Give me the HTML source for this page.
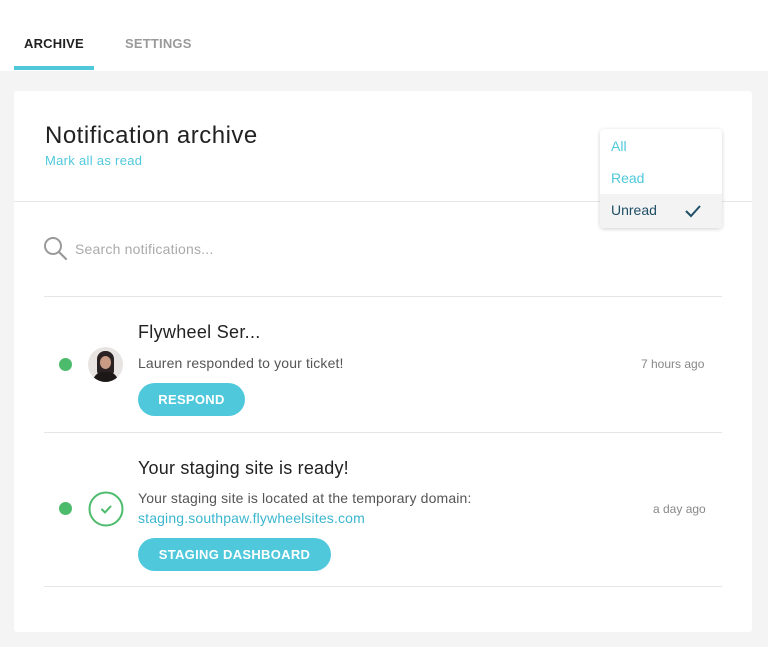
<!DOCTYPE html>
<html><head><style>
*{margin:0;padding:0;box-sizing:border-box}
body{width:768px;height:647px;background:#f4f4f5;font-family:"Liberation Sans",sans-serif;position:relative;overflow:hidden}
.top{position:absolute;left:0;top:0;width:768px;height:71px;background:#fff}
.t{position:absolute;font-size:13px;font-weight:bold;top:36px;letter-spacing:.2px}
.card{position:absolute;left:14px;top:91px;width:738px;height:541px;background:#fff;border-radius:3px}
.abs{position:absolute}
.hr{position:absolute;height:1px;background:#e6e6e6}
.btn{position:absolute;background:#4fc8dc;color:#fff;font-weight:bold;font-size:13px;border-radius:17px;height:33px;line-height:33px;text-align:center;letter-spacing:.3px}
.dot{position:absolute;width:13px;height:13px;border-radius:50%;background:#4cbc6c}
</style></head><body>
<div class="top"></div>
<div class="t" style="left:24px;color:#222">ARCHIVE</div>
<div class="t" style="left:125px;color:#9a9a9a">SETTINGS</div>
<div class="abs" style="left:14px;top:66px;width:80px;height:4px;background:#4fc8dc"></div>
<div class="card"></div>
<div class="abs" style="left:45px;top:122px;font-size:24px;letter-spacing:.5px;color:#222">Notification archive</div>
<div class="abs" style="left:45px;top:153px;font-size:13px;letter-spacing:.3px;color:#4fc8dc">Mark all as read</div>
<div class="hr" style="left:14px;top:201px;width:738px"></div>
<svg class="abs" style="left:43px;top:236px" width="26" height="26" viewBox="0 0 26 26"><circle cx="10" cy="10" r="8" fill="none" stroke="#999" stroke-width="2"/><path d="M16 16l7 7" stroke="#999" stroke-width="2.2" stroke-linecap="round"/></svg>
<div class="abs" style="left:75px;top:241px;font-size:14px;letter-spacing:.2px;color:#aaa">Search notifications...</div>
<div class="hr" style="left:44px;top:296px;width:678px"></div>
<div class="abs" style="left:138px;top:322px;font-size:18px;letter-spacing:.3px;color:#222">Flywheel Ser...</div>
<div class="dot" style="left:59px;top:358px"></div>
<div class="abs" style="left:88px;top:347px;width:35px;height:35px;border-radius:50%;background:#e8e4e2;overflow:hidden"><div style="position:absolute;left:9px;top:4px;width:17px;height:24px;border-radius:8px 8px 4px 4px;background:#2a2222"></div><div style="position:absolute;left:12px;top:9px;width:11px;height:13px;border-radius:50%;background:#c99a84"></div><div style="position:absolute;left:5px;top:25px;width:25px;height:14px;border-radius:10px 10px 0 0;background:#1c1818"></div></div>
<div class="abs" style="left:138px;top:355px;font-size:14px;letter-spacing:.15px;color:#555">Lauren responded to your ticket!</div>
<div class="abs" style="left:641px;top:357px;font-size:12px;color:#888">7 hours ago</div>
<div class="btn" style="left:138px;top:383px;width:107px">RESPOND</div>
<div class="hr" style="left:44px;top:432px;width:678px"></div>
<div class="abs" style="left:138px;top:458px;font-size:18px;letter-spacing:.2px;color:#222">Your staging site is ready!</div>
<div class="dot" style="left:59px;top:502px"></div>
<svg class="abs" style="left:88px;top:491px" width="36" height="36" viewBox="0 0 36 36"><circle cx="18" cy="18" r="16.5" fill="none" stroke="#4cbc6c" stroke-width="2"/><path d="M14 18.5l3 3 5.5-6" fill="none" stroke="#4cbc6c" stroke-width="2" stroke-linecap="round" stroke-linejoin="round"/></svg>
<div class="abs" style="left:138px;top:490px;font-size:14px;letter-spacing:.15px;color:#555">Your staging site is located at the temporary domain:</div>
<div class="abs" style="left:138px;top:510px;font-size:14px;letter-spacing:.15px;color:#3bb6cf">staging.southpaw.flywheelsites.com</div>
<div class="abs" style="left:653px;top:502px;font-size:12px;color:#888">a day ago</div>
<div class="btn" style="left:138px;top:538px;width:193px">STAGING DASHBOARD</div>
<div class="hr" style="left:44px;top:586px;width:678px"></div>
<div class="abs" style="left:600px;top:129px;width:122px;height:99px;background:#fff;border-radius:4px;box-shadow:0 1px 4px rgba(0,0,0,.18);overflow:hidden">
<div class="abs" style="left:11px;top:9px;font-size:14px;color:#4fc8dc">All</div>
<div class="abs" style="left:11px;top:41px;font-size:14px;color:#4fc8dc">Read</div>
<div class="abs" style="left:0;top:65px;width:122px;height:34px;background:#f3f3f4"></div>
<div class="abs" style="left:11px;top:73px;font-size:14px;color:#1f4f66">Unread</div>
<svg class="abs" style="left:84px;top:75px" width="18" height="14" viewBox="0 0 18 14"><path d="M2 7l5 5 9-10" fill="none" stroke="#1f4f66" stroke-width="2"/></svg>
</div>
</body></html>
